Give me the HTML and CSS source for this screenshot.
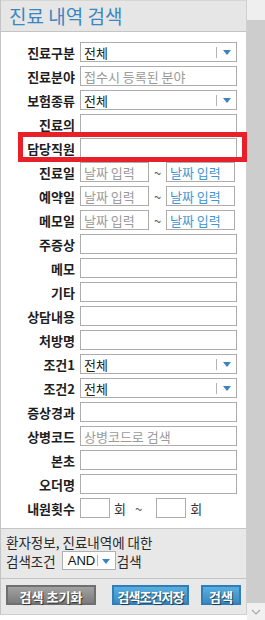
FILE: index.html
```html
<html>
<head>
<meta charset="utf-8">
<title>진료 내역 검색</title>
<link rel="stylesheet" href="styles.css">
</head>
<body>

<div id="page">

<div id="panel">

	<div id="header">진료 내역 검색</div>

	<div id="formbody">
		<div class="row"><span class="lbl">진료구분</span><div class="sel"><span>전체</span><i class="bar"></i><i class="arrow"></i></div></div>
		<div class="row"><span class="lbl">진료분야</span><input type="text" class="field" placeholder="접수시 등록된 분야"></div>
		<div class="row"><span class="lbl">보험종류</span><div class="sel"><span>전체</span><i class="bar"></i><i class="arrow"></i></div></div>
		<div class="row"><span class="lbl">진료의</span><input type="text" class="field"></div>
		<div class="row"><span class="lbl">담당직원</span><input type="text" class="field"></div>
		<div class="row"><span class="lbl">진료일</span><input type="text" class="date" placeholder="날짜 입력"><span class="tilde">~</span><input type="text" class="date datehi" placeholder="날짜 입력"></div>
		<div class="row"><span class="lbl">예약일</span><input type="text" class="date" placeholder="날짜 입력"><span class="tilde">~</span><input type="text" class="date datehi" placeholder="날짜 입력"></div>
		<div class="row"><span class="lbl">메모일</span><input type="text" class="date" placeholder="날짜 입력"><span class="tilde">~</span><input type="text" class="date datehi" placeholder="날짜 입력"></div>
		<div class="row"><span class="lbl">주증상</span><input type="text" class="field"></div>
		<div class="row"><span class="lbl">메모</span><input type="text" class="field"></div>
		<div class="row"><span class="lbl">기타</span><input type="text" class="field"></div>
		<div class="row"><span class="lbl">상담내용</span><input type="text" class="field"></div>
		<div class="row"><span class="lbl">처방명</span><input type="text" class="field"></div>
		<div class="row"><span class="lbl">조건1</span><div class="sel"><span>전체</span><i class="bar"></i><i class="arrow"></i></div></div>
		<div class="row"><span class="lbl">조건2</span><div class="sel"><span>전체</span><i class="bar"></i><i class="arrow"></i></div></div>
		<div class="row"><span class="lbl">증상경과</span><input type="text" class="field"></div>
		<div class="row"><span class="lbl">상병코드</span><input type="text" class="field" placeholder="상병코드로 검색"></div>
		<div class="row"><span class="lbl">본초</span><input type="text" class="field"></div>
		<div class="row"><span class="lbl">오더명</span><input type="text" class="field"></div>
		<div class="row"><span class="lbl">내원횟수</span><input type="text" class="count"><span class="unit">회</span><span class="tilde2">~</span><input type="text" class="count"><span class="unit">회</span></div>
	</div>

	<div id="condwrap">
		<div class="condtext">환자정보, 진료내역에 대한</div>
		<div class="condline">검색조건 <div class="andsel"><span>AND</span><i class="bar"></i><i class="arrow"></i></div>검색</div>
	</div>

	<div id="buttonwrap">
		<button class="btn gray">검색 초기화</button>
		<button class="btn blue save">검색조건저장</button>
		<button class="btn blue go">검색</button>
	</div>

	<div id="highlight"></div>

</div> <!-- ends div#panel -->

<div id="scrollbar">
	<div class="sc-top"></div>
	<div class="sc-thumb"></div>
	<div class="sc-bottom">
		<svg width="10" height="6" viewBox="0 0 10 6"><path d="M1 1 L5 5 L9 1" fill="none" stroke="#a8a8a8" stroke-width="1.2"/></svg>
	</div>
</div>

</div>

</body>
</html>
```

FILE: styles.css
```css
body{
	margin: 0;
	background: white;
	font-family: "Noto Sans CJK KR", "Noto Sans", sans-serif;
	font-size: 13px;
	color: #222;
}

#page{
	display: flex;
	height: 620px;
}

#panel{
	position: relative;
	width: 247px;
	box-sizing: border-box;
	border-left: 1px solid #c4c4c4;
	border-right: 1px solid #d0d0d0;
	height: 615px;
	border-bottom: 1px solid #cfcfcf;
	background: #e8e8e8;
}

#header{
	height: 30px;
	line-height: 30px;
	border-top: 1px solid #d6d6d6;
	border-bottom: 1px solid #c4c4c4;
	background: #e6e6e6;
	color: #3a86c1;
	font-size: 19px;
	padding-left: 8px;
}

#formbody{
	background: white;
	padding: 10px 0 10px 0;
}

.row{
	display: flex;
	align-items: center;
	height: 20px;
	margin-bottom: 4px;
}

.row:last-child{
	margin-bottom: 0;
}

.lbl{
	width: 74px;
	text-align: right;
	margin-right: 5px;
	font-weight: bold;
	color: #1e1e1e;
	white-space: nowrap;
}

input{
	font-family: "Noto Sans CJK KR", "Noto Sans", sans-serif;
	font-size: 13px;
	color: #222;
	height: 20px;
	box-sizing: border-box;
	border: 1px solid #adadad;
	padding: 0 3px;
	margin: 0;
	outline: none;
}

input::placeholder{
	color: #9a9a9a;
}

.field{
	width: 157px;
}

.date{
	width: 69px;
}

.datehi::placeholder{
	color: #4596d4;
}

.tilde{
	width: 17px;
	text-align: center;
	color: #555;
}

.count{
	width: 30px;
}

.unit{
	margin-left: 4px;
	color: #333;
}

.tilde2{
	margin: 0 14px 0 9px;
	color: #555;
}

.sel{
	width: 157px;
	height: 20px;
	box-sizing: border-box;
	border: 1px solid #adadad;
	background: white;
	display: flex;
	align-items: center;
	padding-left: 3px;
}

.sel span{
	flex: 1;
}

.bar{
	width: 1px;
	height: 11px;
	background: #b4b4b4;
}

.arrow{
	width: 0;
	height: 0;
	border-left: 4px solid transparent;
	border-right: 4px solid transparent;
	border-top: 5px solid #3a84c0;
	margin: 1px 5px 0 6px;
}

#condwrap{
	border-top: 1px solid #c4c4c4;
	padding: 4px 0 8px 5px;
	font-size: 13.5px;
	color: #2a2a2a;
}

.condtext{
	height: 18px;
	line-height: 18px;
}

.condline{
	height: 19px;
	display: flex;
	align-items: center;
	white-space: pre;
}

.andsel{
	width: 54px;
	height: 19px;
	box-sizing: border-box;
	border: 1px solid #b0b0b0;
	background: white;
	display: flex;
	align-items: center;
	padding-left: 5px;
	margin: 0 1px 0 3px;
}

.andsel span{
	flex: 1;
	font-family: "Liberation Sans", sans-serif;
	font-size: 13px;
	color: #111;
}

.andsel .arrow{
	margin: 1px 5px 0 4px;
}

#buttonwrap{
	border-top: 1px solid #c4c4c4;
	display: flex;
	padding: 6px 0 8px 5px;
}

.btn{
	height: 20px;
	box-sizing: border-box;
	font-family: "Noto Sans CJK KR", "Noto Sans", sans-serif;
	font-size: 13px;
	font-weight: bold;
	color: white;
	padding: 0;
	margin: 0;
	text-shadow: 1px 1px 1px rgba(0,0,0,0.6);
	white-space: nowrap;
}

.gray{
	width: 90px;
	background: linear-gradient(#a2a2a2, #7c7c7c);
	border: 2px solid #6f6f6f;
}

.blue{
	background: linear-gradient(#5aaedd, #3a8ac2);
	border: 2px solid #2f7db9;
}

.save{
	width: 77px;
	margin-left: 16px;
	letter-spacing: -1px;
}

.go{
	width: 40px;
	margin-left: 12px;
}

#highlight{
	position: absolute;
	left: 17px;
	top: 132px;
	width: 229px;
	height: 30px;
	box-sizing: border-box;
	border: 5px solid #e8202a;
}

#scrollbar{
	width: 18px;
	display: flex;
	flex-direction: column;
}

.sc-top{
	height: 20px;
	background: #efefef;
}

.sc-thumb{
	flex: 1;
	background: #cdcdcd;
}

.sc-bottom{
	height: 17px;
	background: #f0f0f0;
	display: flex;
	align-items: center;
	justify-content: center;
}
```
